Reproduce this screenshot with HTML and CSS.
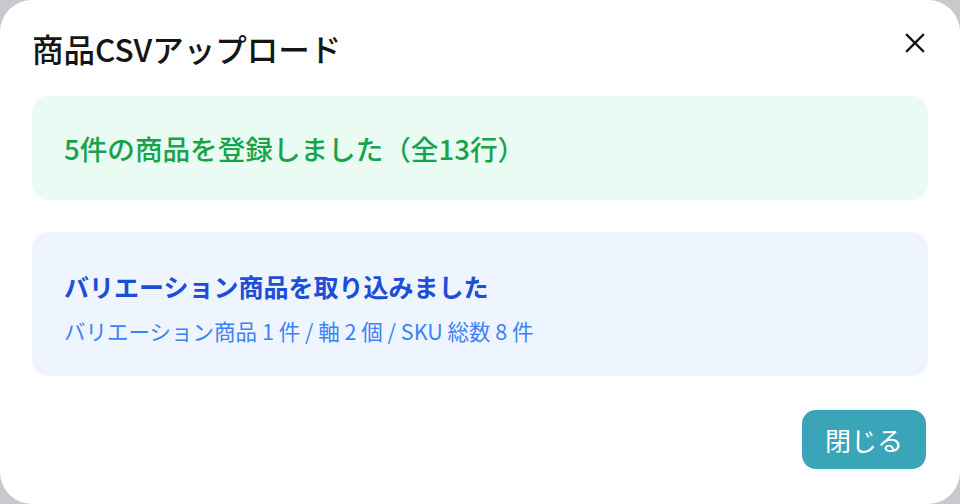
FILE: index.html
```html
<!DOCTYPE html>
<html lang="ja">
<head>
  <meta charset="UTF-8">
  <title>商品CSVアップロード</title>
  <link rel="stylesheet" href="styles.css">
</head>
<body>

  <div class="dialogo">
    <div class="cabecera">
      <h1>商品CSVアップロード</h1>
      <button class="cerrar" aria-label="閉じる">
        <svg width="20" height="20" viewBox="0 0 20 20">
          <path d="M2 2 L18 18 M18 2 L2 18" stroke="#111" stroke-width="2.4" stroke-linecap="square" fill="none"/>
        </svg>
      </button>
    </div>

    <div class="aviso exito">
      <p>5件の商品を登録しました（全13行）</p>
    </div>

    <div class="aviso info">
      <p class="info-titulo">バリエーション商品を取り込みました</p>
      <p class="info-detalle">バリエーション商品 1 件 / 軸 2 個 / SKU 総数 8 件</p>
    </div>

    <div class="pie">
      <button class="boton">閉じる</button>
    </div>
  </div>

</body>
</html>
```

FILE: styles.css
```css
body {
  margin: 0;
  background-color: #c9c9cd;
  font-family: "Noto Sans CJK JP", "Noto Sans", sans-serif;
}

.dialogo {
  width: 960px;
  height: 504px;
  box-sizing: border-box;
  background: #ffffff;
  border-radius: 32px;
  padding: 28px 32px 35px;
  display: flex;
  flex-direction: column;
}

.cabecera {
  display: flex;
  justify-content: space-between;
  align-items: center;
  height: 40px;
}

.cabecera h1 {
  margin: 0;
  font-size: 31.5px;
  font-weight: 500;
  color: #151515;
  line-height: 40px;
}

.cerrar {
  border: none;
  background: none;
  padding: 0;
  width: 20px;
  height: 20px;
  margin: -10px 3px 0 0;
  cursor: pointer;
}

.aviso {
  border-radius: 16px;
  padding: 0 32px;
  box-sizing: border-box;
}

.aviso p {
  margin: 0;
}

.exito {
  margin-top: 28px;
  height: 104px;
  background: #eafbf3;
  display: flex;
  align-items: center;
  color: #16a34a;
  font-size: 27.6px;
  font-weight: 500;
}

.info {
  margin-top: 32px;
  height: 144px;
  background: #eef5ff;
  padding-top: 36px;
}

.info-titulo {
  color: #1d4ed8;
  font-size: 25px;
  font-weight: 600;
  line-height: 36px;
}

.info-detalle {
  color: #3b82f6;
  font-size: 21.5px;
  line-height: 30px;
  margin-top: 12px !important;
}

.pie {
  margin-top: auto;
  display: flex;
  justify-content: flex-end;
}

.boton {
  height: 59px;
  padding: 0 23px;
  margin-right: 2px;
  border: none;
  border-radius: 14px;
  background: #3aa5b8;
  color: white;
  font-family: inherit;
  font-size: 26px;
  cursor: pointer;
}
```
